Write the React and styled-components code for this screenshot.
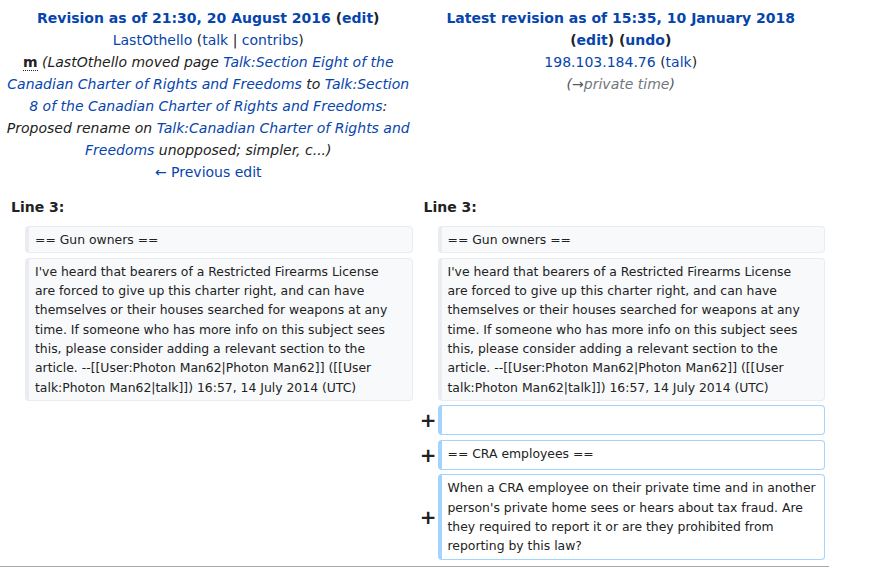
import React from 'react';
import styled, { createGlobalStyle, css } from 'styled-components';

const GlobalStyle = createGlobalStyle`
  body {
    margin: 0;
    background: #ffffff;
    color: #222222;
    font-family: "DejaVu Sans", sans-serif;
  }
`

const Page = styled.div`
  width: 829px;
  border-bottom: 1px solid #a2a9b1;
  padding-bottom: 2px;
`

const DiffGrid = styled.div`
  display: grid;
  grid-template-columns: 17px 1fr 17px 1fr;
  column-gap: 4px;
  row-gap: 4.5px;
  padding: 4px;
`

const HeaderCell = styled.div`
  grid-column: span 2;
  text-align: center;
  font-size: 14px;
  line-height: 22px;
  padding: 3px ${p => (p.$inset ? '8px' : '0')} 0;
`

const HeaderTitle = styled.div`
  font-weight: bold;
`

const Link = styled.a`
  color: #0645ad;
  text-decoration: none;
  cursor: pointer;
`

const Minor = styled.abbr`
  font-weight: bold;
  text-decoration: none;
  border-bottom: 1px dotted #222222;
`

const Comment = styled.span`
  font-style: italic;
  color: ${p => (p.$muted ? '#72777d' : '#222222')};
`

const Paren = styled.span`
  color: #54595d;
`

const Arrow = styled.span`
  color: #54595d;
`

const LineNo = styled.div`
  grid-column: span 2;
  font-size: 14px;
  font-weight: bold;
  line-height: 22px;
  padding: 8px 7px 4px;
`

const Marker = styled.div`
  display: flex;
  align-items: center;
  justify-content: flex-end;
  font-size: 20px;
  line-height: 30px;
  font-weight: bold;
  margin-right: -3px;
`

const lineKinds = {
  context: css`
    background: #f8f9fa;
    border-color: #eaecf0;
  `,
  added: css`
    background: #ffffff;
    border-color: #a3d3ff;
  `,
}

const DiffLine = styled.div`
  font-size: 12.4px;
  line-height: 19.3px;
  color: #222222;
  border-style: solid;
  border-width: 1px 1px 1px 4px;
  border-radius: 4px;
  padding: 3px 4px 3px 6px;
  overflow-wrap: break-word;
  ${p => lineKinds[p.$kind]}
`

const Empty = styled.div``

const Wrapped = ({ lines }) =>
  lines.map((l, i) => (
    <React.Fragment key={i}>
      {i > 0 && <br />}
      {l}
    </React.Fragment>
  ));

const gun = '== Gun owners ==';
const para = [
  "I've heard that bearers of a Restricted Firearms License",
  'are forced to give up this charter right, and can have',
  'themselves or their houses searched for weapons at any',
  'time. If someone who has more info on this subject sees',
  'this, please consider adding a relevant section to the',
  'article. --[[User:Photon Man62|Photon Man62]] ([[User',
  'talk:Photon Man62|talk]]) 16:57, 14 July 2014 (UTC)',
];
const question = [
  'When a CRA employee on their private time and in another',
  "person's private home sees or hears about tax fraud. Are",
  'they required to report it or are they prohibited from',
  'reporting by this law?',
];

const App = () => {
  return (
    <>
      <GlobalStyle />
      <Page>
        <DiffGrid>
          <HeaderCell>
            <HeaderTitle>
              <Link>Revision as of 21:30, 20 August 2016</Link> (<Link>edit</Link>)
            </HeaderTitle>
            <div>
              <Link>LastOthello</Link> (<Link>talk</Link> | <Link>contribs</Link>)
            </div>
            <div>
              <Minor title="This is a minor edit">m</Minor>{' '}
              <Comment>
                (LastOthello moved page <Link>Talk:Section Eight of the Canadian Charter of Rights and Freedoms</Link> to{' '}
                <Link>Talk:Section 8 of the Canadian Charter of Rights and Freedoms</Link>: Proposed rename on{' '}
                <Link>Talk:Canadian Charter of Rights and Freedoms</Link> unopposed; simpler, c...)
              </Comment>
            </div>
            <div>
              <Link>← Previous edit</Link>
            </div>
          </HeaderCell>
          <HeaderCell $inset>
            <HeaderTitle>
              <Link>Latest revision as of 15:35, 10 January 2018</Link> (<Link>edit</Link>) (<Link>undo</Link>)
            </HeaderTitle>
            <div>
              <Link>198.103.184.76</Link> (<Link>talk</Link>)
            </div>
            <div>
              <Comment>
                <Paren>(</Paren><Arrow>→</Arrow><Comment $muted>private time</Comment><Paren>)</Paren>
              </Comment>
            </div>
          </HeaderCell>

          <LineNo>Line 3:</LineNo>
          <LineNo>Line 3:</LineNo>

          <Empty />
          <DiffLine $kind="context">{gun}</DiffLine>
          <Empty />
          <DiffLine $kind="context">{gun}</DiffLine>

          <Empty />
          <DiffLine $kind="context"><Wrapped lines={para} /></DiffLine>
          <Empty />
          <DiffLine $kind="context"><Wrapped lines={para} /></DiffLine>

          <Empty />
          <Empty />
          <Marker>+</Marker>
          <DiffLine $kind="added" />

          <Empty />
          <Empty />
          <Marker>+</Marker>
          <DiffLine $kind="added">== CRA employees ==</DiffLine>

          <Empty />
          <Empty />
          <Marker>+</Marker>
          <DiffLine $kind="added"><Wrapped lines={question} /></DiffLine>
        </DiffGrid>
      </Page>
    </>
  );
};

export default App;
